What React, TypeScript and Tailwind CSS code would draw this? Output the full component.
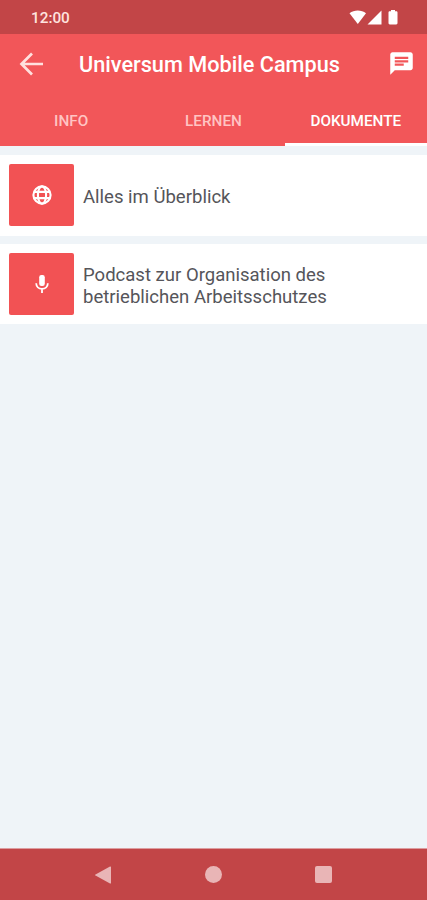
import { MdChat } from 'react-icons/md';
import type { ReactNode } from 'react';
import clsx from 'clsx';

const tabs = ['INFO', 'LERNEN', 'DOKUMENTE'];

function GlobeIcon() {
  return (
    <svg width="20" height="20" viewBox="0 0 20 20" fill="none" stroke="currentColor" strokeWidth="2.1">
      <circle cx="10" cy="10" r="8.6" />
      <ellipse cx="10" cy="10" rx="4.1" ry="8.6" />
      <path d="M2 6.9h16M2 13.1h16" />
    </svg>
  );
}

function MicIcon() {
  return (
    <svg width="14" height="18" viewBox="0 0 14 18" fill="none" stroke="currentColor" strokeWidth="1.8">
      <rect x="4.2" y="0" width="5.6" height="11" rx="2.2" fill="currentColor" stroke="none" />
      <path d="M1.2 8.300c0 3.400 2.500 5.600 5.800 5.600s5.800-2.200 5.800-5.600M7 13.900V18" />
    </svg>
  );
}

const documents: { title: string; icon: ReactNode }[] = [
  { title: 'Alles im Überblick', icon: <GlobeIcon /> },
  { title: 'Podcast zur Organisation des betrieblichen Arbeitsschutzes', icon: <MicIcon /> },
];

function StatusBar() {
  return (
    <div className="flex h-[34px] shrink-0 items-center bg-[#c24547] pr-[28px] pl-[31px] text-white">
      <span className="flex-1 pt-[2px] text-[15.3px] font-medium text-[#ffe3df]">12:00</span>
      <svg width="50" height="16" viewBox="0 0 50 16" fill="currentColor">
        <path d="M0.5 4.2C5 0.6 12.5 0.6 17 4.2L8.8 15Z" />
        <path d="M32.5 1.5V15.5H18.5Z" />
        <path d="M42 1h4v1.3h1.2c.8 0 1.3.5 1.3 1.3v10.5c0 .8-.5 1.4-1.3 1.4h-6.4c-.8 0-1.3-.6-1.3-1.4V3.6c0-.8.5-1.3 1.3-1.3H42z" />
      </svg>
    </div>
  );
}

function Header() {
  return (
    <header className="shrink-0 bg-[#f25659] text-white">
      <div className="flex h-[61px] items-center pr-[12px] pl-[19px]">
        <button aria-label="Zurück" className="pb-[2px]">
          <svg width="25" height="26" viewBox="0 0 25 26" fill="none" stroke="#ffe0de" strokeWidth="2.7">
            <path d="M13 2.5L2.5 13L13 23.5M2.5 13H24" />
          </svg>
        </button>
        <h1 className="flex-1 pt-px pl-[35px] text-[21.7px] font-medium whitespace-nowrap">Universum Mobile Campus</h1>
        <button aria-label="Nachrichten" className="pb-[2px]">
          <MdChat size={27} />
        </button>
      </div>
      <nav className="flex h-[51px]">
        {tabs.map(tab => (
          <button
            key={tab}
            className={clsx(
              'flex-1 border-b-3 pt-[5px] text-[15.3px] font-medium',
              tab === 'DOKUMENTE' ? 'border-white text-white' : 'border-transparent text-[#ffc4c3]'
            )}
          >
            {tab}
          </button>
        ))}
      </nav>
    </header>
  );
}

function NavigationBar() {
  return (
    <div className="flex h-[52px] shrink-0 items-center justify-between border-t border-[#dc9da0] bg-[#c24547] pr-[95px] pl-[94px] text-[#e9b5b6]">
      <svg width="18" height="18" viewBox="0 0 18 18" fill="currentColor">
        <path d="M16 .5c.6-.3 1 0 1 .6v15.8c0 .6-.4.9-1 .6L1.5 9.6c-.6-.3-.6-.9 0-1.2z" />
      </svg>
      <span className="size-[17px] rounded-full bg-current" />
      <span className="size-[17px] rounded-[2px] bg-current" />
    </div>
  );
}

export default function App() {
  return (
    <div className="flex h-[900px] w-[427px] flex-col overflow-hidden bg-[#eff4f8] font-['Roboto',sans-serif]">
      <StatusBar />
      <Header />
      <main className="flex-1 space-y-2 pt-[9px]">
        {documents.map(doc => (
          <div key={doc.title} className="flex h-[81px] bg-white pt-[9px] pl-[9px] last:h-[80px]">
            <div className="flex h-[62px] w-[65px] items-center justify-center rounded-[2px] bg-[#f25254] text-white">
              {doc.icon}
            </div>
            <p className="flex h-[65px] w-[262px] items-center pl-[9px] text-[18.55px] leading-[22px] text-[#55555a]">
              {doc.title}
            </p>
          </div>
        ))}
      </main>
      <NavigationBar />
    </div>
  );
}
